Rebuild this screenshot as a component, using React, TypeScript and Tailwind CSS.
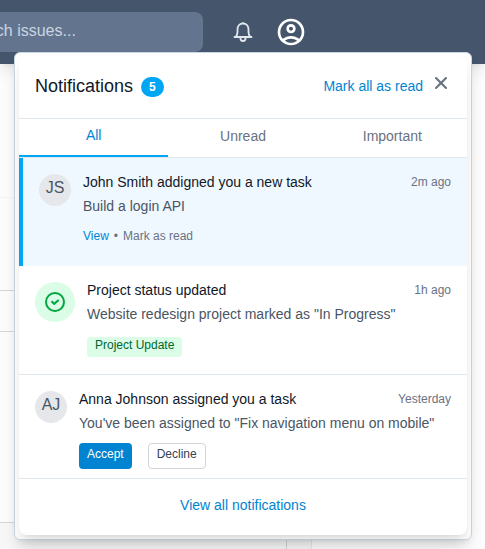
import { X } from "lucide-react";
import type { ReactNode } from "react";

const link = "text-[#0084d1] cursor-pointer";

function BellIcon() {
  return (
    <svg viewBox="0 0 24 24" className="size-6" fill="none" stroke="currentColor" strokeWidth="1.8" strokeLinecap="round" strokeLinejoin="round" aria-hidden="true">
      <path d="M3.500 17h17M5 16.500c1-1.200 1.500-2.500 1.500-4.500V9.500C6.500 6 8.800 3.500 12 3.500s5.500 2.500 5.500 6V12c0 2 .5 3.300 1.500 4.500M12 3.500V2.800" />
      <path d="M9.500 17.500v1a2.500 2.500 0 0 0 5 0v-1" />
    </svg>
  );
}

function UserIcon() {
  return (
    <svg viewBox="0 -960 960 960" className="size-8" fill="currentColor" aria-hidden="true">
      <path d="M234-276q51-39 114-61.5T480-360q69 0 132 22.5T726-276q35-41 54.500-93T800-480q0-133-93.500-226.500T480-800q-133 0-226.500 93.500T160-480q0 59 19.500 111t54.500 93Zm246-164q-59 0-99.500-40.500T340-580q0-59 40.500-99.500T480-720q59 0 99.500 40.500T620-580q0 59-40.500 99.500T480-440Zm0 360q-83 0-156-31.500T197-197q-54-54-85.500-127T80-480q0-83 31.500-156T197-763q54-54 127-85.500T480-880q83 0 156 31.500T763-763q54 54 85.500 127T880-480q0 83-31.500 156T763-197q-54 54-127 85.500T480-80Zm0-80q53 0 100-15.500t86-44.500q-39-29-86-44.500T480-280q-53 0-100 15.500T294-220q39 29 86 44.500T480-160Zm0-360q26 0 43-17t17-43q0-26-17-43t-43-17q-26 0-43 17t-17 43q0 26 17 43t43 17Zm0-60Zm0 360Z" />
    </svg>
  );
}

function CheckIcon() {
  return (
    <svg viewBox="0 0 24 24" className="size-6" fill="none" stroke="currentColor" strokeWidth="2" aria-hidden="true">
      <circle cx="12" cy="12" r="9" />
      <path d="m8.500 11.300 2.700 2.500 4.500-3.800" />
    </svg>
  );
}

function Avatar({ initials }: { initials: string }) {
  return (
    <div className="size-8 shrink-0 rounded-full bg-gray-200 pt-[2px] text-center text-base leading-6 text-gray-600">
      {initials}
    </div>
  );
}

function Body({ title, time, text, children }: { title: string; time: string; text: string; children: ReactNode }) {
  return (
    <div className="min-w-0 flex-1">
      <div className="flex justify-between">
        <h3 className="text-sm text-gray-900">{title}</h3>
        <time className="text-xs leading-5 text-gray-500">{time}</time>
      </div>
      <p className="mt-1 whitespace-nowrap text-sm text-gray-600">{text}</p>
      {children}
    </div>
  );
}

export default function App() {
  return (
    <div className="relative min-h-screen overflow-hidden bg-[#fcfcfc] font-['Liberation_Sans',Arial,sans-serif]">
      <header className="flex h-16 items-center bg-[#45556c] text-white shadow-lg">
        <input
          type="search"
          aria-label="Search issues"
          placeholder="Search issues..."
          className="-ml-14 h-10 w-[259px] rounded-lg bg-[#62748e] pr-4 pb-[2px] pl-[18px] text-base placeholder:text-[#cad5e2]"
        />
        <button aria-label="Alerts" className="ml-7 text-[#e2e8f0]"><BellIcon /></button>
        <button aria-label="Account" className="ml-5"><UserIcon /></button>
      </header>

      <div className="flex h-[485px]">
        <div className="w-[287px]">
          <div className="h-[134px] border-b border-gray-100" />
          <div className="h-[93px] border-b border-gray-300" />
          <div className="h-[41px] border-b border-gray-300" />
          <div className="h-[191px] border-r border-b border-gray-300" />
          <div className="h-[26px] border-r border-gray-300 bg-[#f7f7f7]" />
        </div>
        <div className="w-6 bg-[#f7f7f7]" />
        <div className="flex-1 border-l border-gray-200" />
      </div>

      <div className="absolute top-[52px] right-[13px] left-[14px] rounded-md border border-[#cad5e2] bg-[#fdfdfd] p-1 shadow-lg">
        <section aria-label="Notifications" className="overflow-hidden rounded-lg bg-white shadow-lg">
          <div className="flex items-center justify-between border-b border-[#e2e8f0] px-4 pt-4 pb-[17px]">
            <div className="flex items-center gap-2">
              <h2 className="pb-[2px] text-lg leading-[26px] text-gray-900">Notifications</h2>
              <span className="rounded-full bg-[#00a6f4] px-2 text-xs leading-5 font-bold text-white">5</span>
            </div>
            <div className="flex items-center gap-2">
              <button className={`${link} pb-[2px] text-sm`}>Mark all as read</button>
              <button aria-label="Close" className="pb-2 text-gray-500"><X className="size-5" strokeWidth={2.5} /></button>
            </div>
          </div>

          <div role="tablist" className="grid grid-cols-3 border-b border-[#e2e8f0] text-sm text-gray-500">
            <button role="tab" aria-selected="true" className="h-[38px] border-b-2 border-[#00a6f4] pb-1 text-[#0084d1]">All</button>
            <button role="tab" aria-selected="false" className="h-[38px] pb-1">Unread</button>
            <button role="tab" aria-selected="false" className="h-[38px] pb-1">Important</button>
          </div>

          <article className="flex gap-3 border-l-4 border-[#00a6f4] bg-[#f0f8ff] px-4 pt-[14px] pb-5">
            <div className="pt-[2px]"><Avatar initials="JS" /></div>
            <Body title="John Smith addigned you a new task" time="2m ago" text="Build a login API">
              <div className="mt-[10px] flex h-5 items-center gap-[5px] text-xs text-gray-500">
                <button className={link}>View</button>
                <span>•</span>
                <button>Mark as read</button>
              </div>
            </Body>
          </article>

          <article className="flex gap-3 border-b border-[#e2e8f0] px-4 pt-[14px] pb-[17px]">
            <div className="pt-[2px]">
              <div className="flex size-10 items-center justify-center rounded-full bg-green-100 text-[#00a63e]">
                <CheckIcon />
              </div>
            </div>
            <Body title="Project status updated" time="1h ago" text={'Website redesign project marked as "In Progress"'}>
              <span className="mt-[13px] inline-block h-5 rounded bg-green-100 px-2 text-xs text-green-800">Project Update</span>
            </Body>
          </article>

          <article className="flex gap-3 border-b border-[#e2e8f0] px-4 pt-[14px] pb-[9px]">
            <div className="pt-[2px]"><Avatar initials="AJ" /></div>
            <Body title="Anna Johnson assigned you a task" time="Yesterday" text={'You\'ve been assigned to "Fix navigation menu on mobile"'}>
              <div className="mt-[10px] flex gap-4 text-xs">
                <button className="h-[26px] rounded bg-[#0084d1] px-2 pb-1 text-white">Accept</button>
                <button className="h-[26px] rounded border border-gray-300 px-2 pb-1 text-gray-700">Decline</button>
              </div>
            </Body>
          </article>

          <footer className="px-4 pt-4 pb-5 text-center">
            <a href="#all" className={`${link} block text-sm`}>View all notifications</a>
          </footer>
        </section>
      </div>
    </div>
  );
}
